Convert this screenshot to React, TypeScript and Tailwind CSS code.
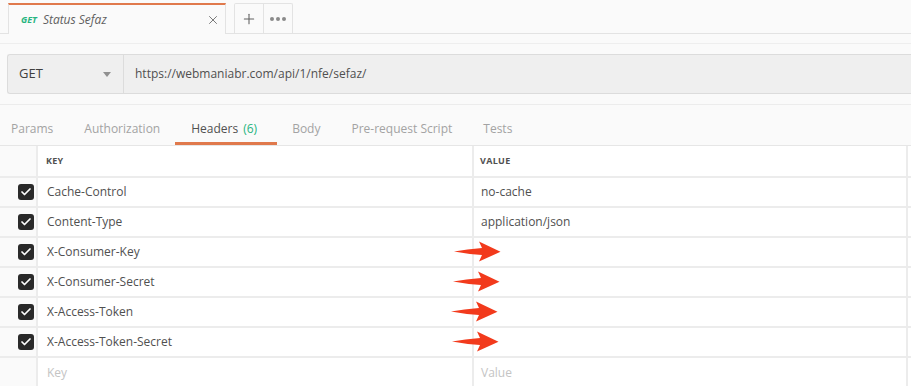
import React from 'react';
import { Check, X, Plus } from 'lucide-react';

type Header = { key: string; value: string; arrow?: number };

const headers: Header[] = [
  { key: 'Cache-Control', value: 'no-cache' },
  { key: 'Content-Type', value: 'application/json' },
  { key: 'X-Consumer-Key', value: '', arrow: 453 },
  { key: 'X-Consumer-Secret', value: '', arrow: 452 },
  { key: 'X-Access-Token', value: '', arrow: 450 },
  { key: 'X-Access-Token-Secret', value: '', arrow: 451 },
];

const tabs = ['Params', 'Authorization', 'Headers', 'Body', 'Pre-request Script', 'Tests'];

const RedArrow: React.FC<{ left: number }> = ({ left }) => (
  <svg
    className="absolute top-[3px] pointer-events-none"
    style={{ left }}
    width="48"
    height="21"
    viewBox="0 0 48 21"
  >
    <path
      d="M1 10.5 Q14 8 29 7 L26 0.5 L47.5 10.8 L26 20.5 L29 14 Q14 13 1 10.5 Z"
      fill="#f23a1c"
    />
  </svg>
);

const App: React.FC = () => {
  return (
    <div
      className="w-[911px] h-[386px] overflow-hidden bg-[#fafafa] text-[12px] text-[#505050]"
      style={{ fontFamily: '"Open Sans", "Noto Sans", sans-serif' }}
    >
      {/* request tabs */}
      <div className="h-[34px] flex items-end pl-[8px] border-b border-[#e3e3e3]">
        <div className="w-[218px] h-[31px] -mb-px flex items-center bg-[#fafafa] border-t-2 border-t-[#e0794c] border-x border-x-[#e3e3e3] pl-[12px] pr-[5px]">
          <span className="text-[9px] font-bold italic text-[#26b47f] mr-[6px]">GET</span>
          <span className="italic text-[12px] text-[#606060] flex-1">Status Sefaz</span>
          <X size={14} strokeWidth={1.6} className="text-[#707070]" />
        </div>
        <div className="ml-[8px] h-[30px] flex border border-b-0 border-[#e3e3e3] rounded-t-[2px]">
          <div className="w-[29px] flex items-center justify-center border-r border-[#e3e3e3]">
            <Plus size={16} strokeWidth={1.6} className="text-[#606060]" />
          </div>
          <div className="w-[28px] flex items-center justify-center gap-[2px]">
            <span className="w-[4px] h-[4px] rounded-full bg-[#8a8a8a]" />
            <span className="w-[4px] h-[4px] rounded-full bg-[#8a8a8a]" />
            <span className="w-[4px] h-[4px] rounded-full bg-[#8a8a8a]" />
          </div>
        </div>
      </div>
      <div className="h-[10px] border-b border-[#eeeeee]" />

      {/* url bar */}
      <div className="pt-[10px] pl-[7px] pb-[10px] border-b border-[#ececec]">
        <div className="h-[40px] flex bg-[#efefef] border border-r-0 border-[#dcdcdc] rounded-l-[3px]">
          <div className="w-[116px] flex items-center justify-between pl-[11px] pr-[12px] border-r border-[#dcdcdc]">
            <span className="text-[13px] text-[#404040]">GET</span>
            <span className="w-0 h-0 border-x-[4px] border-x-transparent border-t-[5px] border-t-[#909090]" />
          </div>
          <div className="flex items-center pl-[11px] text-[12px] text-[#505050]">
            https://webmaniabr.com/api/1/nfe/sefaz/
          </div>
        </div>
      </div>

      {/* section tabs */}
      <div className="h-[41px] flex pl-[11px] gap-[31px] border-b border-[#e6e6e6]">
        {tabs.map((t) =>
          t === 'Headers' ? (
            <div key={t} className="relative flex items-center pt-[7px]">
              <span className="text-[#505050]">Headers</span>
              <span className="ml-[5px] text-[#26b47f]">(6)</span>
              <span className="absolute -left-[16px] -right-[20px] bottom-0 h-[3px] bg-[#e0794c]" />
            </div>
          ) : (
            <div key={t} className={`flex items-center pt-[7px] text-[#a3a3a3] ${t === 'Body' ? 'ml-[4px]' : ''}`}>
              {t}
            </div>
          )
        )}
      </div>

      {/* headers table */}
      <div className="bg-white">
        <div className="h-[32px] flex border-b-2 border-[#ececec]">
          <div className="w-[38px] border-r-2 border-[#ececec] bg-[#fafafa]" />
          <div className="w-[436px] flex items-center pl-[8px] border-r-2 border-[#ececec] text-[9px] font-bold text-[#505050] tracking-[0.3px]">
            KEY
          </div>
          <div className="w-[434px] flex items-center pl-[6px] border-r-2 border-[#ececec] text-[9px] font-bold text-[#505050] tracking-[0.3px]">
            VALUE
          </div>
        </div>
        {headers.map((h) => (
          <div key={h.key} className="relative h-[30px] flex border-b-2 border-[#ececec]">
            <div className="w-[38px] flex items-center justify-end pr-[2px] border-r-2 border-[#ececec] bg-[#fafafa]">
              <span className="w-[16px] h-[16px] rounded-[3px] bg-[#2a2a2a] flex items-center justify-center">
                <Check size={12} strokeWidth={3.5} className="text-white" />
              </span>
            </div>
            <div className="w-[436px] flex items-center pl-[9px] border-r-2 border-[#ececec]">{h.key}</div>
            <div className="w-[434px] flex items-center pl-[7px] border-r-2 border-[#ececec]">{h.value}</div>
            {h.arrow !== undefined && <RedArrow left={h.arrow} />}
          </div>
        ))}
        <div className="h-[30px] flex">
          <div className="w-[38px] border-r-2 border-[#ececec] bg-[#fafafa]" />
          <div className="w-[436px] flex items-center pl-[9px] border-r-2 border-[#ececec] text-[#c4c4c4]">Key</div>
          <div className="w-[434px] flex items-center pl-[7px] border-r-2 border-[#ececec] text-[#c4c4c4]">Value</div>
        </div>
      </div>
    </div>
  );
};

export default App;
